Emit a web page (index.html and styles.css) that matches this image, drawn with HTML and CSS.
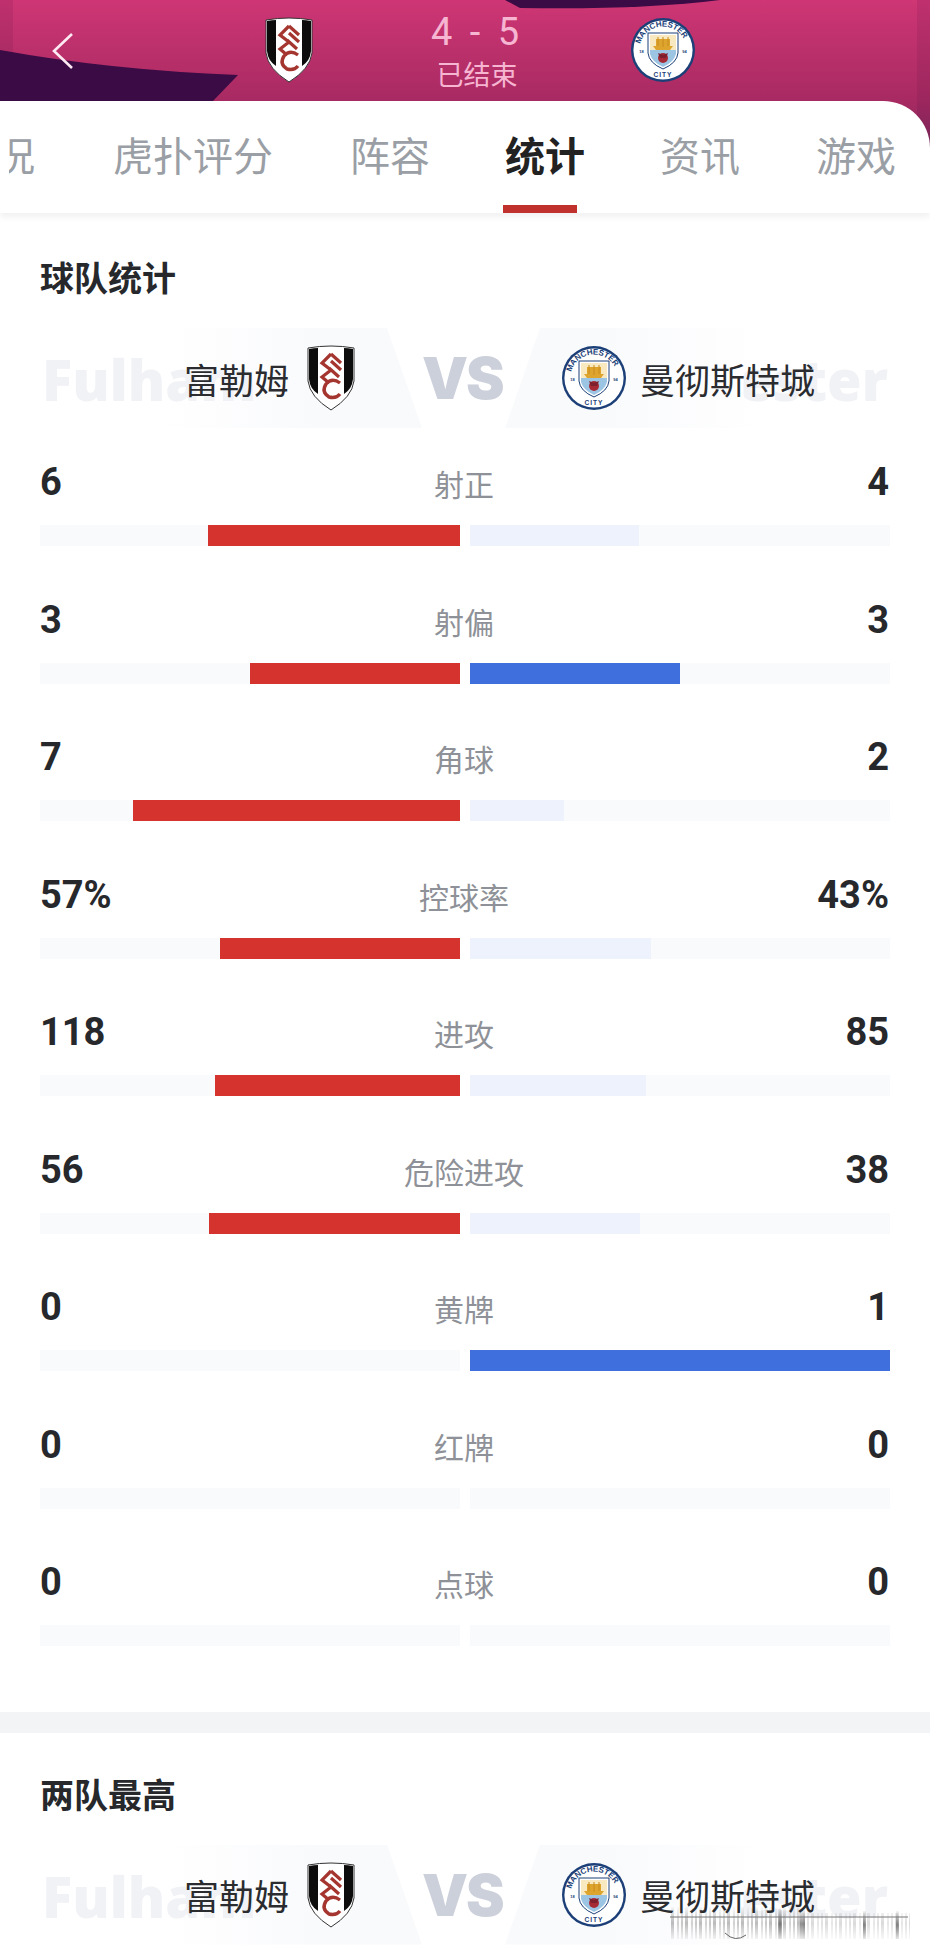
FILE: index.html
```html
<!DOCTYPE html>
<html lang="zh-CN">
<head>
    <meta charset="UTF-8">
    <title>球队统计</title>
    <link rel="stylesheet" href="styles.css">
</head>
<body>
    <svg class="defs" width="0" height="0">
        <defs>
            <symbol id="fulham" viewBox="0 0 50 66">
                <path d="M2 3 Q25 -1 48 3 V36 Q46 52 25 65 Q4 52 2 36 Z" fill="#fff" stroke="#333" stroke-width="1"/>
                <path d="M3 4 Q8 3 12 3 V49 Q4 44 3 34 Z" fill="#0c0c0c"/>
                <path d="M47 4 Q42 3 38 3 V49 Q46 44 47 34 Z" fill="#0c0c0c"/>
                <path d="M25 9 L16 18 L25 25 L16 32 L23 38 M25 9 L35 18 M25 16 L35 25 M23 23 L33 32" fill="none" stroke="#a5352f" stroke-width="3.2"/>
                <path d="M34 38 Q26 32 20 39 Q15 47 23 52 Q30 54 34 49" fill="none" stroke="#a5352f" stroke-width="3.4"/>
            </symbol>
            <symbol id="mancity" viewBox="0 0 66 66">
                <circle cx="33" cy="33" r="32" fill="#1c3f78"/>
                <circle cx="33" cy="33" r="29.6" fill="#fff"/>
                <path id="mc-top" d="M9.5 33 A23.5 23.5 0 0 1 56.5 33" fill="none"/>
                <text class="crest-text" font-size="8" textLength="56"><textPath href="#mc-top" startOffset="8%">MANCHESTER</textPath></text>
                <text class="crest-text" x="33" y="59.5" font-size="6.6" text-anchor="middle" letter-spacing="1">CITY</text>
                <text class="crest-text" x="11.5" y="36" font-size="4" text-anchor="middle">18</text>
                <text class="crest-text" x="54.5" y="36" font-size="4" text-anchor="middle">94</text>
                <path d="M18 16 H48 V36 Q47 46 33 52 Q19 46 18 36 Z" fill="#fff" stroke="#1c3f78" stroke-width="1"/>
                <path d="M20 18 H46 V33 H20 Z" fill="#f8e9c1"/>
                <path d="M20 33 H46 V37 Q44 45 33 50 Q22 45 20 37 Z" fill="#9cc5e4"/>
                <path d="M23 29 H43 L40 33 H26 Z M26 22 H40 V29 H26 Z" fill="#dda52e"/>
                <path d="M33 20 V30 M28 20 V29 M38 20 V29" stroke="#c98a1c" stroke-width="1"/>
                <circle cx="33" cy="41" r="5" fill="#a62a36"/>
                <path d="M28 36 L33 38 L38 36 L36 41 H30 Z" fill="#7d1f2c"/>
            </symbol>
        </defs>
    </svg>

    <header class="match-head">
        <svg class="head-shape" viewBox="0 0 930 101" preserveAspectRatio="none">
            <path d="M0 50 Q110 70 238 75 L213 101 H0 Z" fill="#3a0b45"/>
            <path d="M505 0 H720 Q640 10 520 8 Z" fill="#3a0b45"/>
        </svg>
        <svg class="back" viewBox="0 0 24 40"><path d="M20 3 L2 20 L20 37" fill="none" stroke="#fdeaf3" stroke-width="2.6"/></svg>
        <svg class="head-badge fulham"><use href="#fulham"/></svg>
        <div class="score">
            <div class="score-num">4 - 5</div>
            <div class="score-state">已结束</div>
        </div>
        <svg class="head-badge city"><use href="#mancity"/></svg>
    </header>

    <nav class="tabs">
        <span class="tab tab-cut">况</span>
        <span class="tab">虎扑评分</span>
        <span class="tab">阵容</span>
        <span class="tab active">统计</span>
        <span class="tab">资讯</span>
        <span class="tab">游戏</span>
    </nav>

    <section class="stats">
        <h2>球队统计</h2>
        <div class="versus">
            <div class="vs-panel panel-left"></div>
            <div class="vs-panel panel-right"></div>
            <div class="vs-ghost ghost-left">Fulham</div>
            <div class="vs-ghost ghost-right">Manchester</div>
            <div class="team team-left"><span>富勒姆</span><svg class="team-badge-f"><use href="#fulham"/></svg></div>
            <div class="vs-text">VS</div>
            <div class="team team-right"><svg class="team-badge-c"><use href="#mancity"/></svg><span>曼彻斯特城</span></div>
        </div>

        <div class="stat">
            <div class="stat-line"><b>6</b><span>射正</span><b>4</b></div>
            <div class="bars">
                <div class="track left"><i class="fill red" style="width:252px"></i></div>
                <div class="track"><i class="fill pale" style="width:169px"></i></div>
            </div>
        </div>
        <div class="stat">
            <div class="stat-line"><b>3</b><span>射偏</span><b>3</b></div>
            <div class="bars">
                <div class="track left"><i class="fill red" style="width:210px"></i></div>
                <div class="track"><i class="fill blue" style="width:210px"></i></div>
            </div>
        </div>
        <div class="stat">
            <div class="stat-line"><b>7</b><span>角球</span><b>2</b></div>
            <div class="bars">
                <div class="track left"><i class="fill red" style="width:327px"></i></div>
                <div class="track"><i class="fill pale" style="width:94px"></i></div>
            </div>
        </div>
        <div class="stat">
            <div class="stat-line"><b>57%</b><span>控球率</span><b>43%</b></div>
            <div class="bars">
                <div class="track left"><i class="fill red" style="width:240px"></i></div>
                <div class="track"><i class="fill pale" style="width:181px"></i></div>
            </div>
        </div>
        <div class="stat">
            <div class="stat-line"><b>118</b><span>进攻</span><b>85</b></div>
            <div class="bars">
                <div class="track left"><i class="fill red" style="width:245px"></i></div>
                <div class="track"><i class="fill pale" style="width:176px"></i></div>
            </div>
        </div>
        <div class="stat">
            <div class="stat-line"><b>56</b><span>危险进攻</span><b>38</b></div>
            <div class="bars">
                <div class="track left"><i class="fill red" style="width:251px"></i></div>
                <div class="track"><i class="fill pale" style="width:170px"></i></div>
            </div>
        </div>
        <div class="stat">
            <div class="stat-line"><b>0</b><span>黄牌</span><b>1</b></div>
            <div class="bars">
                <div class="track left"></div>
                <div class="track"><i class="fill blue" style="width:420px"></i></div>
            </div>
        </div>
        <div class="stat">
            <div class="stat-line"><b>0</b><span>红牌</span><b>0</b></div>
            <div class="bars">
                <div class="track left"></div>
                <div class="track"></div>
            </div>
        </div>
        <div class="stat">
            <div class="stat-line"><b>0</b><span>点球</span><b>0</b></div>
            <div class="bars">
                <div class="track left"></div>
                <div class="track"></div>
            </div>
        </div>
    </section>

    <div class="band"></div>

    <section class="stats top">
        <h2>两队最高</h2>
        <div class="versus">
            <div class="vs-panel panel-left"></div>
            <div class="vs-panel panel-right"></div>
            <div class="vs-ghost ghost-left">Fulham</div>
            <div class="vs-ghost ghost-right">Manchester</div>
            <div class="team team-left"><span>富勒姆</span><svg class="team-badge-f"><use href="#fulham"/></svg></div>
            <div class="vs-text">VS</div>
            <div class="team team-right"><svg class="team-badge-c"><use href="#mancity"/></svg><span>曼彻斯特城</span></div>
        </div>
    </section>

    <!-- smeared watermark over the bottom right corner -->
    <svg class="smear" viewBox="0 0 240 32">
        <defs>
            <linearGradient id="streak" x1="0" y1="0" x2="0" y2="1">
                <stop offset="0" stop-color="#333" stop-opacity="0.05"/>
                <stop offset="0.5" stop-color="#333" stop-opacity="0.55"/>
                <stop offset="1" stop-color="#333" stop-opacity="0.1"/>
            </linearGradient>
            <pattern id="streaks" width="14" height="32" patternUnits="userSpaceOnUse">
                <rect x="1" width="3" height="32" fill="url(#streak)" opacity="0.6"/>
                <rect x="7" width="2" height="32" fill="url(#streak)" opacity="0.4"/>
                <rect x="11" width="2" height="32" fill="url(#streak)" opacity="0.5"/>
            </pattern>
        </defs>
        <rect width="130" height="32" fill="url(#streaks)"/>
        <rect x="130" y="6" width="110" height="26" fill="url(#streaks)" opacity="0.55"/>
        <rect x="108" y="2" width="4" height="30" fill="url(#streak)"/>
        <rect x="130" y="2" width="5" height="30" fill="url(#streak)"/>
        <rect x="193" y="4" width="3" height="28" fill="url(#streak)"/>
        <rect x="226" y="4" width="3" height="28" fill="url(#streak)"/>
        <path d="M0 10 H238" stroke="#777" stroke-width="1" fill="none"/>
        <path d="M55 26 Q65 36 76 28" stroke="#666" stroke-width="1" fill="none"/>
    </svg>
</body>
</html>
```

FILE: styles.css
```css
* {
    box-sizing: border-box;
}
body {
    position: relative;
    margin: 0;
    width: 930px;
    height: 1959px;
    overflow: hidden;
    background: #fff;
    font-family: "Noto Sans CJK SC", "Liberation Sans", sans-serif;
    color: #26282c;
}
.defs {
    position: absolute;
}
.crest-text {
    font-family: "Liberation Sans", sans-serif;
    font-weight: 700;
    fill: #1c3f78;
}
.match-head {
    position: relative;
    height: 150px;
    margin-bottom: -49px;
    background: linear-gradient(180deg, #ce3674 0%, #a82a62 67%, #7f2a5c 100%);
    overflow: hidden;
}
.match-head::before,
.match-head::after {
    content: "";
    position: absolute;
    top: 0;
    bottom: 0;
    background: rgba(60, 10, 60, 0.1);
}
.match-head::before {
    left: 0;
    width: 13px;
}
.match-head::after {
    right: 0;
    width: 13px;
}
.head-shape {
    position: absolute;
    left: 0;
    top: 0;
    width: 930px;
    height: 101px;
}
.back {
    position: absolute;
    left: 52px;
    top: 31px;
    width: 24px;
    height: 40px;
}
.head-badge {
    position: absolute;
}
.head-badge.fulham {
    left: 264px;
    top: 17px;
    width: 50px;
    height: 66px;
}
.head-badge.city {
    left: 630px;
    top: 17px;
    width: 66px;
    height: 66px;
}
.score {
    position: absolute;
    left: 377px;
    top: 10px;
    width: 200px;
    text-align: center;
    color: #f6b6d2;
}
.score-num {
    font-family: "Roboto", sans-serif;
    font-size: 38px;
    line-height: 44px;
    letter-spacing: 4px;
}
.score-state {
    margin-top: 2px;
    font-size: 27px;
    line-height: 36px;
}
.tabs {
    position: relative;
    display: flex;
    height: 112px;
    border-radius: 0 47px 0 0;
    background: #fff;
    box-shadow: 0 4px 6px rgba(0, 0, 0, 0.06);
    font-size: 40px;
    color: #9a9ea5;
}
.tab {
    position: absolute;
    top: 25px;
    line-height: 56px;
    white-space: nowrap;
}
.tab:nth-child(1) { left: -5px; clip-path: inset(0 0 0 14px); }
.tab:nth-child(2) { left: 113px; }
.tab:nth-child(3) { left: 350px; }
.tab:nth-child(4) { left: 505px; }
.tab:nth-child(5) { left: 660px; }
.tab:nth-child(6) { left: 816px; }
.tab.active {
    color: #222;
    font-weight: 700;
}
.tab.active::after {
    content: "";
    position: absolute;
    left: -2px;
    width: 74px;
    top: 79px;
    height: 8px;
    background: #c0312e;
}
.stats {
    padding: 43px 40px 22px;
}
.stats.top {
    padding-top: 40px;
}
.stats h2 {
    margin: 0;
    font-size: 34px;
    line-height: 42px;
    font-weight: 700;
    color: #26282c;
}
.versus {
    position: relative;
    height: 100px;
    margin-top: 30px;
    margin-bottom: 24px;
}
.vs-ghost {
    position: absolute;
    top: 13px;
    font-family: "Noto Sans", "Liberation Sans", sans-serif;
    font-size: 56px;
    line-height: 76px;
    font-weight: 900;
    color: #f1f2f6;
}
.ghost-left {
    left: 2px;
}
.ghost-right {
    right: 2px;
    clip-path: inset(0 0 0 200px);
}
.vs-panel {
    position: absolute;
    top: 0;
    width: 260px;
    height: 100px;
}
.panel-left {
    left: 122px;
    background: linear-gradient(90deg, rgba(249, 250, 252, 0), #f9fafc 60%);
    clip-path: polygon(0 0, 225px 0, 260px 100%, 0 100%);
}
.panel-right {
    left: 465px;
    background: linear-gradient(270deg, rgba(249, 250, 252, 0), #f9fafc 60%);
    clip-path: polygon(35px 0, 100% 0, 100% 100%, 0 100%);
}
.team {
    position: absolute;
    top: 0;
    height: 100px;
    display: flex;
    align-items: center;
    font-size: 35px;
    color: #2a2c30;
}
.team-left {
    left: 144px;
    gap: 17px;
}
.team-right {
    left: 521px;
    gap: 13px;
}
.team-badge-f {
    width: 50px;
    height: 66px;
}
.team-badge-c {
    width: 66px;
    height: 66px;
}
.vs-text {
    position: absolute;
    left: 382px;
    top: 15px;
    font-family: "Inter", "Liberation Sans", sans-serif;
    font-size: 58px;
    line-height: 70px;
    font-weight: 900;
    letter-spacing: -2px;
    color: #ccd0da;
}
.stat {
    height: 137.5px;
}
.stat-line {
    display: flex;
    justify-content: space-between;
    align-items: center;
    height: 60px;
    padding-right: 1px;
    position: relative;
}
.stat-line b {
    font-family: "Roboto", "Liberation Sans", sans-serif;
    font-size: 38px;
    font-weight: 700;
    color: #26282c;
}
.stat-line span {
    position: absolute;
    left: 0;
    right: 2px;
    top: 5px;
    text-align: center;
    font-size: 30px;
    line-height: 52px;
    color: #8e9197;
}
.bars {
    display: flex;
    gap: 10px;
    margin-top: 13px;
}
.track {
    flex: 1;
    display: flex;
    height: 21px;
    background: #f9fafb;
}
.track.left {
    justify-content: flex-end;
}
.fill {
    display: block;
    height: 100%;
}
.red {
    background: #d5342e;
}
.blue {
    background: #3f6fdc;
}
.pale {
    background: #eef2fc;
}
.band {
    height: 21px;
    background: #f3f4f6;
}
.smear {
    position: absolute;
    left: 670px;
    top: 1907px;
    width: 240px;
    height: 32px;
}
```
